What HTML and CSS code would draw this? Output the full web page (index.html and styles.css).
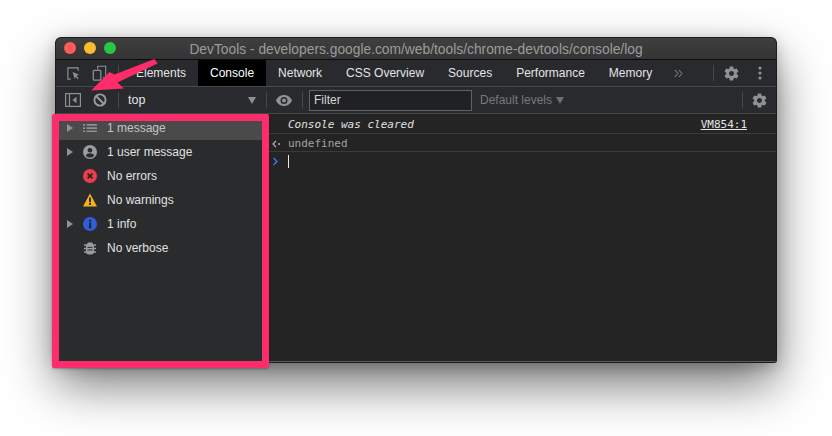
FILE: index.html
```html
<!DOCTYPE html>
<html lang="en">
<head>
<meta charset="utf-8">
<title>DevTools</title>
<link rel="stylesheet" href="styles.css">
</head>
<body>
<svg class="defs" width="0" height="0"><defs>
<symbol id="gear" viewBox="0 0 24 24"><path fill-rule="evenodd" d="M19.43 12.98c.04-.32.07-.64.07-.98s-.03-.66-.07-.98l2.11-1.65c.19-.15.24-.42.12-.64l-2-3.46c-.12-.22-.39-.3-.61-.22l-2.49 1c-.52-.4-1.08-.73-1.69-.98l-.38-2.65C14.46 2.18 14.25 2 14 2h-4c-.25 0-.46.18-.49.42l-.38 2.65c-.61.25-1.17.59-1.69.98l-2.49-1c-.23-.09-.49 0-.61.22l-2 3.46c-.13.22-.07.49.12.64l2.11 1.65c-.04.32-.07.65-.07.98s.03.66.07.98l-2.11 1.65c-.19.15-.24.42-.12.64l2 3.46c.12.22.39.3.61.22l2.49-1c.52.4 1.08.73 1.69.98l.38 2.65c.03.24.24.42.49.42h4c.25 0 .46-.18.49-.42l.38-2.65c.61-.25 1.17-.59 1.69-.98l2.49 1c.23.09.49 0 .61-.22l2-3.46c.12-.22.07-.49-.12-.64l-2.11-1.65zM12 15.5c-1.93 0-3.5-1.57-3.5-3.5s1.57-3.5 3.5-3.5 3.5 1.57 3.5 3.5-1.57 3.5-3.5 3.5z"/></symbol>
</defs></svg>
<div class="window">
  <header class="titlebar">
    <div class="lights"><span class="light red"></span><span class="light yellow"></span><span class="light green"></span></div>
    <div class="title">DevTools - developers.google.com/web/tools/chrome-devtools/console/log</div>
  </header>
  <nav class="tabbar">
    <div class="tool-icons">
      <svg class="ic" width="15" height="15" viewBox="0 0 16 16"><path d="M5 14H2V2h11v3" fill="none" stroke="#8f9194" stroke-width="1.2"/><path d="M7 6.500l7 2.800-2.900 1.200 2.400 2.500-1 1-2.400-2.500L9.400 14z" fill="#8f9194"/></svg>
      <svg class="ic" width="15" height="16" viewBox="0 0 16 18"><path d="M6 5V1.500h9V14h-3" fill="none" stroke="#8f9194" stroke-width="1.2"/><rect x="1" y="6" width="8.500" height="11" rx="1" fill="none" stroke="#8f9194" stroke-width="1.400"/></svg>
    </div>
    <span class="vr vr-tab"></span>
    <div class="tab">Elements</div>
    <div class="tab active">Console</div>
    <div class="tab">Network</div>
    <div class="tab">CSS Overview</div>
    <div class="tab">Sources</div>
    <div class="tab">Performance</div>
    <div class="tab">Memory</div>
    <svg class="chev" width="9" height="9" viewBox="0 0 9 9"><path d="M.8 1l3.200 3.500L.8 8M4.800 1L8 4.500 4.800 8" fill="none" stroke="#8f9194" stroke-width="1"/></svg>
    <div class="tab-end">
      <span class="vr"></span>
      <svg class="gear" width="17" height="17"><use href="#gear"/></svg>
      <svg class="dots" width="4" height="14" viewBox="0 0 4 14"><circle cx="2" cy="2" r="1.600"/><circle cx="2" cy="7" r="1.600"/><circle cx="2" cy="12" r="1.600"/></svg>
    </div>
  </nav>
  <div class="toolbar">
    <svg class="sb-icon" width="16" height="14" viewBox="0 0 16 14"><rect x=".6" y=".6" width="14.800" height="12.800" fill="none" stroke="#8f9194" stroke-width="1.200"/><path d="M4.500 1v12" stroke="#8f9194" stroke-width="1.200"/><path d="M11.500 3.800v6.400L7.500 7z" fill="#8f9194"/></svg>
    <svg class="block-icon" width="14" height="14" viewBox="0 0 14 14"><circle cx="7" cy="7" r="5.600" fill="none" stroke="#9a9c9f" stroke-width="1.900"/><path d="M3 3l8 8" stroke="#9a9c9f" stroke-width="1.900"/></svg>
    <span class="vr vr-a"></span>
    <div class="context"><span>top</span><i class="caret"></i></div>
    <span class="vr"></span>
    <svg class="eye" width="16" height="11" viewBox="0 0 16 11"><path fill-rule="evenodd" d="M8 0c3.600 0 6.600 2.200 8 5.500C14.600 8.800 11.600 11 8 11S1.400 8.800 0 5.500C1.400 2.200 4.400 0 8 0zm0 2a3.500 3.500 0 1 0 0 7 3.500 3.500 0 0 0 0-7zm0 1.500a2 2 0 1 1 0 4 2 2 0 0 1 0-4z" fill="#8f9194"/></svg>
    <span class="vr vr-b"></span>
    <div class="filter">Filter</div>
    <div class="levels">Default levels<i class="caret small"></i></div>
    <div class="toolbar-end">
      <span class="vr"></span>
      <svg class="gear" width="17" height="17"><use href="#gear"/></svg>
    </div>
  </div>
  <div class="main">
    <aside class="sidebar">
      <div class="row selected"><i class="tri"></i>
        <svg class="ri" width="14" height="14" viewBox="0 0 14 14"><path d="M0 3h2v1.700H0zM0 6.200h2v1.700H0zM0 9.400h2v1.700H0zM3.500 3H14v1.700H3.500zM3.500 6.200H14v1.700H3.500zM3.500 9.400H14v1.700H3.500z" fill="#8f9194"/></svg>
        <span class="dim">1 message</span></div>
      <div class="row"><i class="tri"></i>
        <svg class="ri" width="14" height="14" viewBox="0 0 14 14"><circle cx="7" cy="7" r="7" fill="#9a9c9f"/><circle cx="7" cy="5.200" r="2.300" fill="#2a2b2d"/><path d="M2.800 10.800c.6-1.800 2.400-2.500 4.200-2.500s3.600.7 4.200 2.500C10.200 12 8.700 12.600 7 12.600s-3.200-.6-4.200-1.800z" fill="#2a2b2d"/></svg>
        <span>1 user message</span></div>
      <div class="row"><i class="tri none"></i>
        <svg class="ri" width="14" height="14" viewBox="0 0 14 14"><circle cx="7" cy="7" r="7" fill="#e8404a"/><path d="M4.600 4.600l4.800 4.800M9.400 4.600l-4.800 4.800" stroke="#3a1c20" stroke-width="1.800"/></svg>
        <span>No errors</span></div>
      <div class="row"><i class="tri none"></i>
        <svg class="ri" width="14" height="14" viewBox="0 0 14 14"><path d="M7 .4L14 13.600H0z" fill="#f6b40e"/><path d="M6 4.500h2v4.800H6zM6 10h2v2H6z" fill="#2a2b2d"/></svg>
        <span>No warnings</span></div>
      <div class="row"><i class="tri"></i>
        <svg class="ri" width="14" height="14" viewBox="0 0 14 14"><circle cx="7" cy="7" r="7" fill="#2f5fd8"/><path d="M6 2.800h2.200v2H6zM6 5.800h2.200v5.600H6z" fill="#15213f"/></svg>
        <span>1 info</span></div>
      <div class="row"><i class="tri none"></i>
        <svg class="ri" width="14" height="14" viewBox="0 0 14 14"><path d="M5 1.500h4L11 4v8l-2 1.500H5L3 12V4z" fill="#9a9c9f"/><path d="M1 4h2M11 4h2M1 7.500h2M11 7.500h2M1 11h2M11 11h2" stroke="#9a9c9f" stroke-width="1.600"/><path d="M4.500 6.400h5M4.500 9h5" stroke="#2a2b2d" stroke-width="1"/></svg>
        <span>No verbose</span></div>
    </aside>
    <section class="console">
      <div class="msg cleared"><em>Console was cleared</em><a class="src">VM854:1</a></div>
      <div class="msg result">
        <svg class="gutter" width="9" height="8" viewBox="0 0 9 8"><path d="M4 .8L1 4l3 3.200" fill="none" stroke="#b4b6b8" stroke-width="1.200"/><circle cx="7" cy="4" r="1" fill="#b4b6b8"/></svg>
        <span>undefined</span></div>
      <div class="prompt">
        <svg class="gutter" width="9" height="9" viewBox="0 0 9 9"><path d="M2.500 1l3.500 3.500L2.500 8" fill="none" stroke="#3b82f0" stroke-width="1.300"/></svg>
        <i class="cursor"></i></div>
    </section>
  </div>
</div>
<div class="highlight"></div>
<svg class="arrow" width="70" height="40" viewBox="0 0 70 40"><path d="M64.500 0L67.500 4.500 27.500 23.500 34 29.500 1.200 31.500 19.500 13 24.500 15.500z" fill="#fd2c6a"/></svg>
</body>
</html>
```
FILE: styles.css
```css
* { box-sizing: border-box; }
html, body { margin: 0; height: 100%; }
body {
  position: relative;
  background: #fff;
  padding: 38px 56px 0;
  overflow: hidden;
  font-family: "Liberation Sans", Arial, sans-serif;
  font-size: 12px;
}
.defs { position: absolute; }
.window {
  width: 720px;
  height: 324px;
  display: flex;
  flex-direction: column;
  background: #242424;
  border-bottom: 1px solid #5c5c5c;
  border-radius: 5px 5px 2px 2px;
  box-shadow: 0 0 0 1px #1c1c1c, 0 22px 50px rgba(0,0,0,.55), 0 4px 16px rgba(0,0,0,.25);
  overflow: hidden;
}
.titlebar {
  position: relative;
  height: 22px;
  flex: none;
  background: linear-gradient(#3f3f3f, #343434);
  border-bottom: 1px solid #0c0c0c;
  display: flex;
  align-items: center;
  justify-content: center;
  padding-top: 1px;
}
.lights { position: absolute; left: 8px; top: 4px; display: flex; gap: 8px; }
.light { width: 12px; height: 12px; border-radius: 50%; }
.red { background: #fc5b57; }
.yellow { background: #fdbb2e; }
.green { background: #27c840; }
.title { color: #9c9c9c; font-size: 13.800px; white-space: nowrap; }
.tabbar {
  height: 27px;
  flex: none;
  background: #292a2d;
  border-bottom: 1px solid #47484a;
  display: flex;
  align-items: stretch;
  color: #e3e4e5;
  font-size: 12px;
}
.tool-icons { display: flex; align-items: center; gap: 11px; padding-left: 10px; width: 62px; }
.vr { display: block; width: 1px; height: 16px; background: #47484a; flex: none; align-self: center; }
.vr-tab { margin-right: 5px; }
.tab { padding: 0 12px; display: flex; align-items: center; white-space: nowrap; }
.tab.active { background: #000; color: #fff; }
.chev { align-self: center; margin-left: 10px; }
.tab-end { margin-left: auto; display: flex; align-items: center; gap: 9px; padding-right: 14px; }
.gear { fill: #8f9194; }
.dots { fill: #8f9194; margin-left: 9px; }
.toolbar {
  height: 27px;
  flex: none;
  background: #292a2d;
  border-bottom: 1px solid #47484a;
  display: flex;
  align-items: center;
  color: #e3e4e5;
}
.sb-icon { margin-left: 9px; }
.block-icon { margin-left: 12px; }
.vr-a { margin-left: 11px; }
.context { width: 147px; padding: 0 10px 0 9px; display: flex; align-items: center; justify-content: space-between; font-size: 12.500px; }
.caret { display: block; width: 0; height: 0; border: 4px solid transparent; border-top: 7px solid #8f9194; border-bottom: 0; }
.caret.small { display: inline-block; margin-left: 4px; border-top-color: #6d6f72; }
.eye { margin-left: 9px; }
.vr-b { margin-left: 10px; }
.filter {
  margin-left: 6px;
  width: 163px;
  height: 21px;
  border: 1px solid #5f6164;
  background: #202124;
  color: #d4d5d6;
  font-size: 12px;
  display: flex;
  align-items: center;
  padding-left: 4px;
}
.levels { margin-left: 8px; color: #77797c; font-size: 12px; display: flex; align-items: center; }
.toolbar-end { margin-left: auto; display: flex; align-items: center; gap: 8px; padding-right: 8px; }
.main { flex: 1; display: flex; min-height: 0; }
.sidebar {
  width: 210px;
  flex: none;
  background: #2a2b2d;
  padding-top: 2px;
}
.row { height: 24px; display: flex; align-items: center; color: #e0e1e2; font-size: 12px; padding-left: 11px; }
.row.selected { background: #4a4a4a; }
.row .dim { color: #c4c5c6; }
.tri { width: 0; height: 0; border: 4px solid transparent; border-left: 6px solid #8f9194; border-right: 0; flex: none; }
.tri.none { border-left-color: transparent; }
.ri { margin-left: 10px; margin-right: 10px; flex: none; }
.console {
  flex: 1;
  min-width: 0;
  background: #242424;
  font-family: "DejaVu Sans Mono", monospace;
  font-size: 11px;
  border-left: 1px solid #333;
}
.msg { display: flex; align-items: center; border-bottom: 1px solid #3a3a3a; padding-top: 2px; }
.cleared { height: 20px; padding-left: 21px; padding-right: 29px; justify-content: space-between; color: #e0e1e2; }
.result { height: 18px; padding-left: 5px; color: #a0a2a4; }
.result span { margin-left: 7px; }
.src { color: #e3e4e5; text-decoration: underline; }
.prompt { height: 18px; padding-left: 4px; display: flex; align-items: center; }
.cursor { display: block; width: 1px; height: 13px; background: #e8e8e8; margin-left: 8px; }
.highlight {
  position: absolute;
  left: 52px;
  top: 114px;
  width: 217px;
  height: 254px;
  border: 7px solid #fd2c6a;
  border-radius: 2px;
  box-shadow: 0 1px 2px rgba(0,0,0,.25);
}
.arrow { position: absolute; left: 90px; top: 59px; }
```
